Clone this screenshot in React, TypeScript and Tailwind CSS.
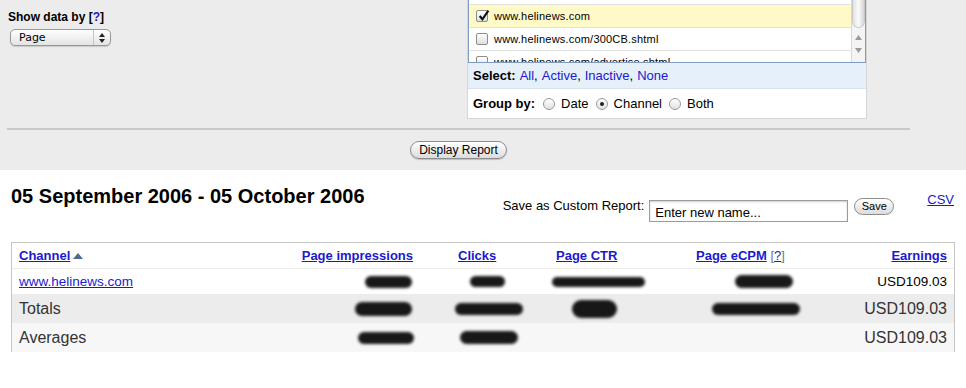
import React from 'react';

const sans = "font-['Liberation_Sans',Arial,sans-serif]";

const listRows = [
  { label: 'www.helinews.com/about.shtml', checked: false, hl: false },
  { label: 'www.helinews.com', checked: true, hl: true },
  { label: 'www.helinews.com/300CB.shtml', checked: false, hl: false },
  { label: 'www.helinews.com/advertise.shtml', checked: false, hl: false },
];

// blurred-out figures: [marginLeft, width, height]
type Blob = [number, number, number];
const rows: {
  label: string;
  kind: 'link' | 'total' | 'avg';
  cells: (Blob | null)[];
}[] = [
  { label: 'www.helinews.com', kind: 'link', cells: [[64, 47, 12], [49, 35, 11], [1, 93, 10], [54, 58, 13]] },
  { label: 'Totals', kind: 'total', cells: [[54, 57, 14], [34, 68, 12], [21, 45, 18], [31, 88, 12]] },
  { label: 'Averages', kind: 'avg', cells: [[57, 56, 12], [39, 58, 13], null, null] },
];

function Checkbox({ checked }: { checked: boolean }) {
  return (
    <span className="relative w-[12px] h-[12px] shrink-0 rounded-[2px] border border-[#8d8d8d] bg-gradient-to-b from-white to-[#dedede]">
      {checked && (
        <svg viewBox="0 0 12 12" className="absolute left-[0px] top-[-2px] w-[13px] h-[13px]">
          <path d="M2.5 6.5 L5 9.5 L10.5 1.5" fill="none" stroke="#111" strokeWidth="2" />
        </svg>
      )}
    </span>
  );
}

function Radio({ on }: { on?: boolean }) {
  return (
    <span className="w-[12px] h-[12px] shrink-0 rounded-full border border-[#9a9a9a] bg-gradient-to-b from-white to-[#e2e2e2] flex items-center justify-center">
      {on && <span className="w-[4px] h-[4px] rounded-full bg-[#222]" />}
    </span>
  );
}

function Smudge({ b }: { b: Blob | null }) {
  if (!b) return null;
  return (
    <div
      className="rounded-full bg-black blur-[1.5px] opacity-90"
      style={{ marginLeft: b[0], width: b[1], height: b[2] }}
    />
  );
}

export default function App() {
  return (
    <div className={`w-[966px] h-[388px] overflow-hidden bg-white ${sans} text-black`}>
      {/* Report options */}
      <section className="bg-[#ececec] h-[170px]">
        <div className="flex">
          <div className="w-[467px] pl-[8px] pt-[10px]">
            <div className="text-[12px] leading-[15px] font-bold">
              Show data by <span>[</span>
              <span className="text-[#1a1acc]">?</span>
              <span>]</span>
            </div>
            <div className="mt-[4px] ml-[2px] w-[101px] h-[17px] rounded-[5px] border border-[#999] bg-gradient-to-b from-white to-[#e4e4e4] shadow-[0_1px_1px_rgba(0,0,0,0.15)] flex items-center">
              <span className="pl-[8px] text-[11px] font-['DejaVu_Sans',sans-serif] flex-1 leading-none">Page</span>
              <span className="w-[17px] h-full border-l border-[#c4c4c4] flex flex-col items-center justify-center gap-[2px]">
                <svg viewBox="0 0 6 4" className="w-[6px] h-[4px]"><path d="M0 4 L3 0 L6 4Z" fill="#222" /></svg>
                <svg viewBox="0 0 6 4" className="w-[6px] h-[4px]"><path d="M0 0 L3 4 L6 0Z" fill="#222" /></svg>
              </span>
            </div>
          </div>

          <div className="w-[400px] bg-white border-x border-b border-[#d6d6d6]">
            {/* channel list */}
            <div className="h-[63px] flex border-x border-b border-[#7f9bbf] overflow-hidden">
              <div className="flex-1 -mt-[18px]">
                {listRows.map((r) => (
                  <div
                    key={r.label}
                    className={`h-[23px] flex items-center gap-[6px] pl-[7px] border-b border-[#e2e2e2] text-[11px] tracking-[0.2px] ${r.hl ? 'bg-[#fff9c8]' : 'bg-white'}`}
                  >
                    <Checkbox checked={r.checked} />
                    <span>{r.label}</span>
                  </div>
                ))}
              </div>
              <div className="w-[14px] border-l border-[#d8d8d8] bg-[#f4f4f4] flex flex-col items-center">
                <div className="w-[13px] h-[28px] rounded-b-[7px] bg-gradient-to-r from-[#e2e2e2] via-[#fafafa] to-[#d6d6d6] border border-[#c8c8c8] border-t-0" />
                <svg viewBox="0 0 7 5" className="w-[7px] h-[5px] mt-[7px]"><path d="M0 5 L3.5 0 L7 5Z" fill="#9a9a9a" /></svg>
                <svg viewBox="0 0 7 5" className="w-[7px] h-[5px] mt-[8px]"><path d="M0 0 L3.5 5 L7 0Z" fill="#9a9a9a" /></svg>
              </div>
            </div>
            <div className="h-[26px] bg-[#e6f0fa] border-b border-[#d9e2ec] pl-[5px] flex items-center text-[13px]">
              <b>Select:</b>
              <span className="ml-[4px] text-[#1a1acc]">All</span>,
              <span className="ml-[4px] text-[#1a1acc]">Active</span>,
              <span className="ml-[4px] text-[#1a1acc]">Inactive</span>,
              <span className="ml-[4px] text-[#1a1acc]">None</span>
            </div>
            <div className="h-[29px] pl-[5px] flex items-center text-[13px]">
              <b>Group by:</b>
              <span className="ml-[8px] flex items-center gap-[6px]"><Radio /> Date</span>
              <span className="ml-[7px] flex items-center gap-[6px]"><Radio on /> Channel</span>
              <span className="ml-[7px] flex items-center gap-[6px]"><Radio /> Both</span>
            </div>
          </div>
        </div>

        <div className="ml-[7px] w-[903px] mt-[9px] h-[2px] bg-[#c9c9c9]" />
        <div className="ml-[7px] w-[903px] flex justify-center mt-[11px]">
          <button className="h-[18px] px-[8px] rounded-full border border-[#8c8c8c] bg-gradient-to-b from-white to-[#dcdcdc] shadow-[0_1px_1px_rgba(0,0,0,0.2)] text-[12px] leading-none">
            Display Report
          </button>
        </div>
      </section>

      {/* Report */}
      <section>
        <div className="flex items-start pl-[11px] pr-[12px] pt-[14px]">
          <h1 className="text-[20px] leading-[24px] font-bold">05 September 2006 - 05 October 2006</h1>
          <div className="ml-auto mt-[14px] flex items-start">
            <span className="text-[13px] leading-[16px]">Save as Custom Report:</span>
            <input
              className="ml-[5px] mt-[2px] w-[199px] h-[22px] border border-[#9c9c9c] shadow-[inset_0_1px_2px_rgba(0,0,0,0.2)] px-[5px] pt-[3px] text-[13px] bg-white outline-none"
              defaultValue="Enter new name..."
            />
            <button className="ml-[6px] w-[40px] h-[17px] rounded-full border border-[#8c8c8c] bg-gradient-to-b from-white to-[#dcdcdc] text-[11px] leading-none">
              Save
            </button>
            <span className="ml-[33px] -mt-[8px] text-[13px] text-[#1a1acc] underline">CSV</span>
          </div>
        </div>

        <div className="mt-[20px] ml-[11px] w-[944px] border-x border-t border-[#c6c6c6]">
          <div className="grid grid-cols-[289px_120px_130px_130px_130px_1fr] h-[26px] items-center border-b border-[#ececec] text-[13px] font-bold text-[#1a1acc]">
            <span className="pl-[7px] flex items-center">
              <span className="underline">Channel</span>
              <svg viewBox="0 0 10 6" className="w-[10px] h-[6px] ml-[3px]"><path d="M0 6 L5 0 L10 6Z" fill="#4d6b8e" /></svg>
            </span>
            <span className="text-right pr-[8px] underline">Page impressions</span>
            <span className="pl-[37px] underline">Clicks</span>
            <span className="pl-[5px] underline">Page CTR</span>
            <span className="pl-[15px]">
              <span className="underline">Page eCPM</span>{' '}
              <span className="font-normal text-[#777]">[<span className="text-[#1a1acc] underline">?</span>]</span>
            </span>
            <span className="text-right pr-[7px] underline">Earnings</span>
          </div>
          {rows.map((r) => (
            <div
              key={r.label}
              className={`grid grid-cols-[289px_120px_130px_130px_130px_1fr] items-center ${
                r.kind === 'link' ? 'h-[25px] bg-white text-[13.5px]' : r.kind === 'total' ? 'h-[29px] bg-[#ececec] text-[16px] text-[#333]' : 'h-[29px] bg-[#f7f7f7] text-[16px] text-[#333]'
              }`}
            >
              <span className={`pl-[7px] ${r.kind === 'link' ? 'pt-[2px] text-[#1a1acc] underline' : ''}`}>{r.label}</span>
              {r.cells.map((c, i) => (
                <div key={i} className="flex items-center">
                  <Smudge b={c} />
                </div>
              ))}
              <span className={`text-right pr-[7px] ${r.kind === 'link' ? 'pt-[2px]' : ''}`}>USD109.03</span>
            </div>
          ))}
        </div>
      </section>
    </div>
  );
}
